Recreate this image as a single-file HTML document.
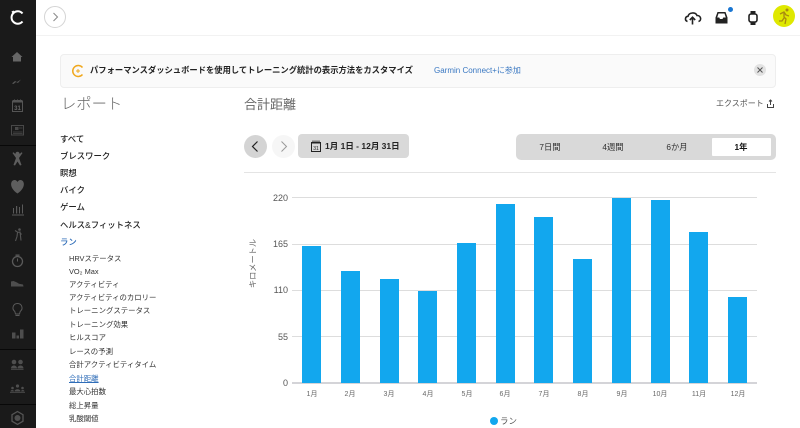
<!DOCTYPE html>
<html lang="ja"><head><meta charset="utf-8"><title>合計距離</title>
<style>
*{box-sizing:border-box}
html,body{margin:0;padding:0;width:800px;height:428px;overflow:hidden;background:#fff}
body{font-family:"Liberation Sans","Noto Sans CJK JP",sans-serif;color:#222;position:relative;filter:blur(.3px)}
.a{position:absolute;white-space:nowrap}
.m{font-size:8.400px;font-weight:500;left:60px;color:#222;line-height:12px}
.s{font-size:7.400px;left:69px;color:#333;line-height:11px}
.g{position:absolute;left:292px;width:465px;height:1px;background:#ddd}
.b{position:absolute;width:19px;background:#12a7ee;bottom:45px}
.y{position:absolute;font-size:9px;color:#555;text-align:right;width:30px;left:258px;line-height:10px}
.x{position:absolute;font-size:7px;color:#666;width:30px;text-align:center;top:390px;line-height:9px}
.t{position:absolute;font-size:8.300px;color:#333;top:142px;line-height:10px;text-align:center;width:50px}
</style></head><body>
<div class="a" style="left:0;top:0;width:36px;height:428px;background:#1a1a1a"></div>
<div class="a" style="left:0;top:145px;width:36px;height:1px;background:#080808"></div>
<div class="a" style="left:0;top:349px;width:36px;height:1px;background:#080808"></div>
<div class="a" style="left:0;top:404px;width:36px;height:1px;background:#080808"></div>
<svg class="a" style="left:0;top:0" width="36" height="428" viewBox="0 0 36 428" fill="#555" stroke="none">
<path d="M22.500 13.500A6.200 6.200 0 1 0 22.500 21.500M12 12.500l2-1.200" fill="none" stroke="#fff" stroke-width="2"/>
<path d="M17 52l-5.500 5h1.500v4.500h8v-4.500h1.500z" fill="#666"/>
<path d="M12 83.500l3-2.500 2 1 4-2.500-3 3.500-2-1-2.500 2z"/>
<rect x="12.500" y="101.500" width="10" height="10" fill="none" stroke="#555"/><rect x="12.500" y="100" width="10" height="2.500"/><path d="M14.500 99.500v2M17.500 99.500v2M20.500 99.500v2" stroke="#555"/>
<text x="17.500" y="110.200" font-size="6" font-weight="700" text-anchor="middle" fill="#666" font-family="Liberation Sans">31</text>
<rect x="11.500" y="125.500" width="12" height="9.500" fill="none" stroke="#484848"/><rect x="15" y="127" width="3.500" height="3" fill="#484848"/><path d="M19 128h3.500M13 132h9.500M13 133.500h9.500" stroke="#484848" stroke-width=".7"/>
<circle cx="17.500" cy="154" r="2.200" fill="#5e5e5e"/><path d="M12.500 153l1-.7 4 4 4-4 1 .7-3.500 5 2.500 7-1.500.5-2.500-4-2.500 4-1.500-.5 2.500-7z" fill="#5e5e5e"/>
<path d="M17.500 193.500c-9-6-7-13.500-3-13.500 1.500 0 2.500 1 3 2 .5-1 1.500-2 3-2 4 0 6 7.500-3 13.500z" fill="#5e5e5e"/>
<path d="M12 214.500h12v1H12zM13 208h1v5.500h-1zM16 206h1.200v7.500H16zM19 207h1v6.500h-1zM22 204.500h1v9h-1z" fill="#5a5a5a"/>
<circle cx="19.500" cy="229.500" r="1.300"/><path d="M15.500 241l1.500-4.500 .5-4 2.500-.5 .5 4 .5 4.500M17.500 232l-2.500-1.500M19.500 232l2 2.500" fill="none" stroke="#555" stroke-width="1.100"/>
<circle cx="17.500" cy="261.500" r="5" fill="none" stroke="#5a5a5a" stroke-width="1.300"/><rect x="15.500" y="254.500" width="4" height="1.300" fill="#5a5a5a"/><path d="M17.500 261.500v-3" stroke="#5a5a5a"/>
<path d="M11 281.500l2.500-.5 3.500 1.500 2 1.200 4 .8.500 2H11z" fill="#4e4e4e"/>
<path d="M14.800 311.500c-3.500-3-1.500-8 2.700-8s6.200 5 2.700 8l-.7 2.500h-4zM15.500 315.500h4" fill="none" stroke="#5a5a5a" stroke-width="1"/>
<path d="M12 338.500h3.500v-6H12zM16.500 338.500H19v-3h-2.500zM20 338.500h3.500v-9H20z" fill="#4e4e4e"/>
<circle cx="14" cy="362" r="2.300" fill="#4e4e4e"/><circle cx="20.500" cy="362" r="2.300" fill="#4e4e4e"/><path d="M11 368.500c0-4 6-4 6 0zM17.500 368.500c0-4 6-4 6 0zM11 369h12.500v.8H11z" fill="#4e4e4e"/>
<g fill="#4e4e4e"><circle cx="17.500" cy="386" r="1.600"/><circle cx="12.500" cy="388" r="1.300"/><circle cx="22.500" cy="388" r="1.300"/><path d="M14.500 391.500c0-3 6-3 6 0zM10.500 391.500c0-2 3.500-2 3.500 0zM21 391.500c0-2 3.500-2 3.500 0zM10 392h15v.7H10z"/></g>
<path d="M17.500 411.500l5.500 3.200v6.500l-5.500 3.200-5.500-3.200v-6.500z" fill="none" stroke="#555" stroke-width="1.300"/><circle cx="17.500" cy="418" r="3" fill="#4e4e4e"/>
</svg>
<div class="a" style="left:36px;top:35px;width:764px;height:1px;background:#f2f2f2"></div>
<svg class="a" style="left:44px;top:6px" width="23" height="23" viewBox="0 0 23 23"><circle cx="11" cy="11" r="10.500" fill="#fff" stroke="#d4d4d4"/><path d="M9.500 7l4 4-4 4" fill="none" stroke="#888" stroke-width="1"/></svg>
<svg class="a" style="left:684px;top:8px" width="90" height="20" viewBox="0 0 90 20">
<path d="M3.500 13.500c-3-1-2.500-5 .5-5.200 1-4 7.500-4.500 9-.8 4-.2 5 5 1.500 6" fill="none" stroke="#222" stroke-width="1.600"/><path d="M8.500 16.500v-7M5.800 12l2.700-2.700 2.700 2.700" fill="none" stroke="#222" stroke-width="1.600"/>
<path d="M33.500 4h8l2 5.500v6h-12v-6z" fill="#222"/><path d="M34.500 5.500h6l1.300 4h-2.500l-.8 1.500h-2.500l-.8-1.500h-2z" fill="#fff"/>
<rect x="65" y="6" width="8" height="8" rx="2" fill="none" stroke="#222" stroke-width="1.600"/><rect x="66.500" y="3" width="5" height="3" fill="#222"/><rect x="66.500" y="14" width="5" height="3" fill="#222"/>
</svg>
<div class="a" style="left:728px;top:7px;width:5px;height:5px;border-radius:50%;background:#1a76d2"></div>
<div class="a" style="left:773px;top:5px;width:22px;height:22px;border-radius:50%;background:#dfe800"></div>
<svg class="a" style="left:773px;top:5px" width="22" height="22" viewBox="0 0 22 22"><circle cx="14" cy="5" r="1.500" fill="#a88a10"/><path d="M7 9l4-2 2 3 3 1M11 8l0 4 2 2-1 5M11 13l-2 3-3 0" fill="none" stroke="#a88a10" stroke-width="1.300"/></svg>

<div class="a" style="left:60px;top:54px;width:716px;height:34px;background:#fafafa;border:1px solid #eee;border-radius:4px"></div>
<svg class="a" style="left:71px;top:64px" width="14" height="14" viewBox="0 0 14 14"><path d="M11.500 3.500A5.500 5.500 0 1 0 11.500 10.500" fill="none" stroke="#f0a81e" stroke-width="1.500"/><path d="M5 7h4M7 5v4" stroke="#f0a81e"/></svg>
<div class="a" style="left:90px;top:64px;font-size:8.300px;font-weight:700;line-height:13px;color:#222">パフォーマンスダッシュボードを使用してトレーニング統計の表示方法をカスタマイズ</div>
<div class="a" style="left:434px;top:65px;font-size:8px;line-height:11px;color:#3a78c2">Garmin Connect+に参加</div>
<div class="a" style="left:754px;top:64px;width:12px;height:12px;border-radius:50%;background:#e2e2e2"></div>
<svg class="a" style="left:754px;top:64px" width="12" height="12" viewBox="0 0 12 12"><path d="M3.500 3.500l5 5M8.500 3.500l-5 5" stroke="#555"/></svg>

<div class="a" style="left:61px;top:95px;font-size:15.300px;font-weight:300;color:#666;line-height:20px">レポート</div>
<div class="a m" style="top:133px">すべて</div>
<div class="a m" style="top:150px">ブレスワーク</div>
<div class="a m" style="top:167px">瞑想</div>
<div class="a m" style="top:184px">バイク</div>
<div class="a m" style="top:201px">ゲーム</div>
<div class="a m" style="top:219px">ヘルス&amp;フィットネス</div>
<div class="a m" style="top:236px;color:#2f6db8">ラン</div>
<div class="a s" style="top:253px">HRVステータス</div>
<div class="a s" style="top:266px">VO₂ Max</div>
<div class="a s" style="top:279px">アクティビティ</div>
<div class="a s" style="top:292px">アクティビティのカロリー</div>
<div class="a s" style="top:305px">トレーニングステータス</div>
<div class="a s" style="top:319px">トレーニング効果</div>
<div class="a s" style="top:332px">ヒルスコア</div>
<div class="a s" style="top:346px">レースの予測</div>
<div class="a s" style="top:359px">合計アクティビティタイム</div>
<div class="a s" style="top:373px;color:#2f6db8;text-decoration:underline">合計距離</div>
<div class="a s" style="top:386px">最大心拍数</div>
<div class="a s" style="top:400px">総上昇量</div>
<div class="a s" style="top:413px">乳酸閾値</div>

<div class="a" style="left:244px;top:96px;font-size:13px;color:#666;line-height:17px">合計距離</div>
<div class="a" style="left:716px;top:98px;font-size:8px;color:#555;line-height:11px">エクスポート</div>
<svg class="a" style="left:766px;top:98px" width="10" height="11" viewBox="0 0 10 11"><path d="M1.500 6v3.500h6V6M4.500 7V2M3 3.500l1.500-1.500 1.500 1.500" fill="none" stroke="#444"/></svg>

<div class="a" style="left:244px;top:135px;width:23px;height:23px;border-radius:50%;background:#d4d4d4"></div>
<svg class="a" style="left:244px;top:135px" width="23" height="23" viewBox="0 0 23 23"><path d="M13.500 6.500l-5 5 5 5" fill="none" stroke="#222" stroke-width="1.200"/></svg>
<div class="a" style="left:272px;top:135px;width:23px;height:23px;border-radius:50%;background:#f6f6f6"></div>
<svg class="a" style="left:272px;top:135px" width="23" height="23" viewBox="0 0 23 23"><path d="M9.500 6.500l5 5-5 5" fill="none" stroke="#999" stroke-width="1"/></svg>
<div class="a" style="left:298px;top:134px;width:111px;height:24px;border-radius:4px;background:#d9d9d9"></div>
<svg class="a" style="left:310px;top:140px" width="12" height="12" viewBox="0 0 12 12"><rect x="1.500" y="2.500" width="9" height="9" fill="none" stroke="#222"/><path d="M1.500 3h9M3 .5v3M5 .5v3M7 .5v3M9 .5v3" stroke="#222"/><text x="6" y="10" font-size="5" text-anchor="middle" fill="#222" font-family="Liberation Sans">31</text></svg>
<div class="a" style="left:325px;top:140px;font-size:8.500px;font-weight:700;line-height:12px;color:#222">1月 1日 - 12月 31日</div>

<div class="a" style="left:516px;top:134px;width:260px;height:26px;border-radius:5px;background:#d9d9d9"></div>
<div class="a" style="left:712px;top:138px;width:59px;height:18px;border-radius:1px;background:#fff"></div>
<div class="t" style="left:525px">7日間</div>
<div class="t" style="left:588px">4週間</div>
<div class="t" style="left:652px">6か月</div>
<div class="t" style="left:716px;font-weight:700;color:#111">1年</div>
<div class="a" style="left:244px;top:172px;width:532px;height:1px;background:#e4e4e4"></div>

<div class="g" style="top:197px"></div><div class="g" style="top:244px"></div><div class="g" style="top:290px"></div><div class="g" style="top:336px"></div><div class="g" style="top:382px;height:2px;left:292px;background:#d4d4d8"></div>
<div class="y" style="top:193px">220</div><div class="y" style="top:239px">165</div><div class="y" style="top:285px">110</div><div class="y" style="top:332px">55</div><div class="y" style="top:378px">0</div>
<div class="a" style="left:223px;top:258px;width:60px;height:11px;font-size:8.200px;color:#666;line-height:11px;transform:rotate(-90deg);text-align:center">キロメートル</div>

<div class="b" style="left:302px;height:137px"></div>
<div class="b" style="left:341px;height:112px"></div>
<div class="b" style="left:380px;height:104px"></div>
<div class="b" style="left:418px;height:92px"></div>
<div class="b" style="left:457px;height:140px"></div>
<div class="b" style="left:496px;height:179px"></div>
<div class="b" style="left:534px;height:166px"></div>
<div class="b" style="left:573px;height:124px"></div>
<div class="b" style="left:612px;height:185px"></div>
<div class="b" style="left:651px;height:183px"></div>
<div class="b" style="left:689px;height:151px"></div>
<div class="b" style="left:728px;height:86px"></div>

<div class="x" style="left:297px">1月</div><div class="x" style="left:335px">2月</div><div class="x" style="left:374px">3月</div><div class="x" style="left:413px">4月</div><div class="x" style="left:452px">5月</div><div class="x" style="left:490px">6月</div><div class="x" style="left:529px">7月</div><div class="x" style="left:568px">8月</div><div class="x" style="left:607px">9月</div><div class="x" style="left:645px">10月</div><div class="x" style="left:684px">11月</div><div class="x" style="left:723px">12月</div>

<div class="a" style="left:490px;top:417px;width:8px;height:8px;border-radius:50%;background:#12a7ee"></div>
<div class="a" style="left:500px;top:415px;font-size:8.500px;color:#555;line-height:12px">ラン</div>
</body></html>
